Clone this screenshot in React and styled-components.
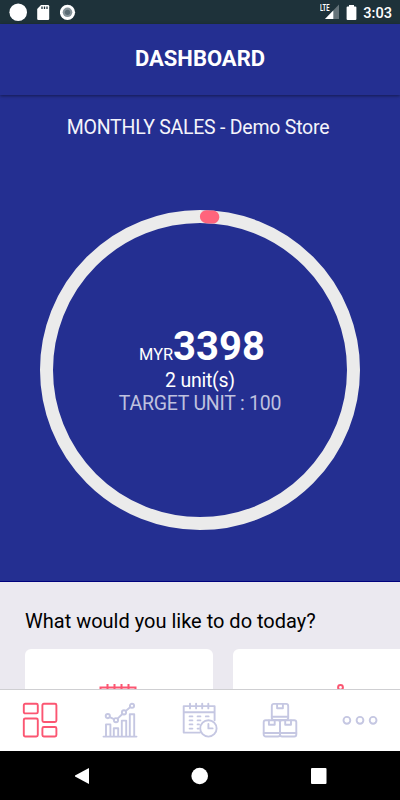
import React from 'react';
import styled, { createGlobalStyle } from 'styled-components';

const Global = createGlobalStyle`
  * { box-sizing: border-box; }
  body { margin: 0; background: #000; font-family: Roboto, "Liberation Sans", sans-serif; }
  svg { display: block; flex: none; }
`;

const Screen = styled.div`
  display: flex;
  flex-direction: column;
  width: 400px;
  height: 800px;
  overflow: hidden;
  background: #242f91;
`;

const StatusBar = styled.div`
  display: flex;
  flex: none;
  align-items: center;
  justify-content: space-between;
  height: 24px;
  padding: 0 8px 0 9px;
  background: #1e323a;
`;

const StatusGroup = styled.div`
  display: flex;
  align-items: center;
  gap: ${(p) => p.$gap}px;
`;

const Clock = styled.span`
  color: #fff;
  font-size: 14.6px;
  line-height: 24px;
  font-weight: 500;
  padding-top: 2px;
`;

const Header = styled.header`
  display: flex;
  flex: none;
  align-items: center;
  justify-content: center;
  height: 71px;
  color: #fff;
  font-size: 22px;
  font-weight: 700;
  padding-bottom: 3px;
  box-shadow: 0 1px 3px rgba(0, 0, 0, 0.45);
`;

const Sales = styled.section`
  display: flex;
  flex: none;
  flex-direction: column;
  align-items: center;
  height: 487px;
  padding-top: 21px;
  border-bottom: 1px solid #00007c;
`;

const StoreTitle = styled.div`
  color: #f4f4fb;
  font-size: 19.5px;
  letter-spacing: -0.24px;
  line-height: 24px;
  margin-left: -4px;
`;

const Gauge = styled.div`
  display: grid;
  place-items: center;
  width: 320px;
  height: 320px;
  margin-top: 70px;
  & > * { grid-area: 1 / 1; }
`;

const Totals = styled.div`
  display: flex;
  flex-direction: column;
  align-items: center;
  padding-top: 7px;
  color: #fff;
`;

const Amount = styled.div`
  display: flex;
  align-items: baseline;
  padding-left: 4px;
  font-size: 40px;
  line-height: 30px;
  font-weight: 700;
`;

const Currency = styled.span`
  font-size: 16.4px;
  font-weight: 400;
`;

const Units = styled.div`
  font-size: 19.5px;
  letter-spacing: -0.24px;
  line-height: 22.5px;
  color: ${(p) => (p.$muted ? '#bfc1df' : '#fff')};
`;

const Actions = styled.section`
  flex: none;
  height: 107px;
  padding: 27px 0 0 25px;
  overflow: hidden;
  background: #ebe9f0;
`;

const Question = styled.h2`
  margin: 0;
  color: #000;
  font-size: 20px;
  line-height: 24px;
  font-weight: 400;
`;

const Cards = styled.div`
  display: flex;
  gap: 20px;
  margin-top: 16px;
`;

const Card = styled.div`
  display: flex;
  flex: none;
  justify-content: center;
  width: 188px;
  height: 150px;
  padding-top: 35px;
  border-radius: 6px;
  background: #fff;
`;

const TabBar = styled.nav`
  display: grid;
  flex: none;
  grid-template-columns: repeat(5, 1fr);
  place-items: center;
  height: 62px;
  padding-bottom: 1px;
  border-top: 1px solid #cfcfd2;
  background: #fff;
`;

const Tab = styled.div`
  color: ${(p) => (p.$active ? '#fb5672' : '#c5c7e2')};
`;

const NavBar = styled.div`
  display: grid;
  flex: none;
  grid-template-columns: 163px 74px 163px;
  place-items: center;
  height: 49px;
  background: #000;
`;

const Icon = ({ children }) => (
  <svg width="36" height="36" viewBox="0 0 36 36" fill="none" stroke="currentColor" strokeWidth="1.9" strokeLinejoin="round" strokeLinecap="round">
    {children}
  </svg>
);

const DashboardIcon = () => (
  <Icon>
    <rect x="1.8" y="1.8" width="14" height="9.6" rx="1.4" />
    <rect x="20.4" y="1.8" width="14" height="18.2" rx="1.4" />
    <rect x="1.8" y="16.5" width="14" height="18" rx="1.4" />
    <rect x="20.4" y="25" width="14" height="9.5" rx="1.4" />
  </Icon>
);

const ChartIcon = () => (
  <Icon>
    <path d="M1.5 34.6h33M4 34.6V22.4h4.4v12.2M11.8 34.6V26.3h4.4v8.3M19.8 34.6V18.6h4.4v16M27.8 34.6V12.3h4.4v22.3M7.7 15.2l4.3 2M15.6 16.6l4.8-4.6M23.9 8.9l4.2-3.7" />
    <circle cx="5.8" cy="14.1" r="2.1" />
    <circle cx="14" cy="18.2" r="2.1" />
    <circle cx="22" cy="10.4" r="2.1" />
    <circle cx="30" cy="3.8" r="2.1" />
  </Icon>
);

const CalendarIcon = () => (
  <Icon>
    <path d="M18 30.6H1.7V4.1h30.9v14.2M1.7 10.3h30.9M8 1.6v4.8M14.1 1.6v4.8M20.2 1.6v4.8M26.3 1.6v4.8" />
    <path d="M7.6 14.4h2.8M15.6 14.4h2.8M23.8 14.4h2.8M7.6 18.4h2.8M15.6 18.4h2.8M7.6 22.4h2.8M15.6 22.4h1.4M7.6 26.6h2.8M15.6 26.6h1" />
    <circle cx="26.4" cy="26.4" r="8.2" />
    <path d="M26.4 22v4.4h4.2" />
  </Icon>
);

const BoxesIcon = () => (
  <Icon>
    <rect x="9.8" y="1.9" width="16.4" height="16" rx="2" />
    <path d="M9.8 14.7h16.4M15.1 2v4.3h5.8V2" />
    <rect x="1.7" y="18.2" width="16.3" height="16.3" rx="2" />
    <rect x="18" y="18.2" width="16.3" height="16.3" rx="2" />
    <path d="M1.7 31h32.6M6.9 18.4v4.3h5.8v-4.3M23.2 18.4v4.3H29v-4.3" />
  </Icon>
);

const MoreIcon = () => (
  <Icon>
    <circle cx="4.9" cy="18.3" r="3.4" />
    <circle cx="18" cy="18.3" r="3.4" />
    <circle cx="31.1" cy="18.3" r="3.4" />
  </Icon>
);

const tabs = [DashboardIcon, ChartIcon, CalendarIcon, BoxesIcon, MoreIcon];

const radius = 153.5;
const pointAt = (deg) => {
  const a = (deg * Math.PI) / 180;
  return `${160 + radius * Math.sin(a)} ${160 - radius * Math.cos(a)}`;
};

export default function App() {
  return (
    <>
      <Global />
      <Screen>
        <StatusBar>
          <StatusGroup $gap={10}>
            <svg width="18" height="24"><circle cx="9.2" cy="12.2" r="8.8" fill="#fff" /></svg>
            <svg width="13" height="24">
              <path d="M4 5h7q1.2 0 1.2 1.2v12.6q0 1.2-1.2 1.2H1.4Q.2 20 .2 18.8V9z" fill="#fff" />
              <path d="M5 6.5v2.5M7.5 6.5v2.5M10 6.5v2.5" stroke="#1e323a" strokeWidth="1.3" />
            </svg>
            <svg width="16" height="24">
              <circle cx="7.5" cy="12.3" r="7.6" fill="#fff" />
              <circle cx="7.5" cy="12.3" r="4.8" fill="#87949a" />
              <circle cx="7.5" cy="12.3" r="2.6" fill="#5b6c74" />
            </svg>
          </StatusGroup>
          <StatusGroup $gap={6}>
            <svg width="20" height="24">
              <path d="M19 4.5V19H5z" fill="#657379" />
              <path d="M13.3 10.5V19H5z" fill="#fff" />
              <text x="0" y="11" fill="#fff" fontSize="8.5" fontWeight="700" textLength="9.5" lengthAdjust="spacingAndGlyphs">LTE</text>
            </svg>
            <svg width="11" height="24">
              <path d="M3 5h5v1.5h1.4q1 0 1 1V19q0 1-1 1H1.6q-1 0-1-1V7.5q0-1 1-1H3z" fill="#fff" />
            </svg>
            <Clock>3:03</Clock>
          </StatusGroup>
        </StatusBar>
        <Header>DASHBOARD</Header>
        <Sales>
          <StoreTitle>MONTHLY SALES - Demo Store</StoreTitle>
          <Gauge>
            <svg width="320" height="320" fill="none" strokeWidth="13">
              <circle cx="160" cy="160" r={radius} stroke="#ebebeb" />
              <path d={`M${pointAt(2.4)} A${radius} ${radius} 0 0 1 ${pointAt(4.8)}`} stroke="#ff647c" strokeLinecap="round" />
            </svg>
            <Totals>
              <Amount><Currency>MYR</Currency>3398</Amount>
              <Units>2 unit(s)</Units>
              <Units $muted>TARGET UNIT : 100</Units>
            </Totals>
          </Gauge>
        </Sales>
        <Actions>
          <Question>What would you like to do today?</Question>
          <Cards>
            <Card>
              <svg width="40" height="40" fill="none" stroke="#fb5672" strokeWidth="2">
                <path d="M1.5 36V3.5h35V36M1 10h35M8.5 0v6M15.5 0v6M22.5 0v6M29.5 0v6" />
              </svg>
            </Card>
            <Card>
              <svg width="40" height="40" fill="none" stroke="#fb5672" strokeWidth="2">
                <circle cx="33.5" cy="3.4" r="2.4" />
                <path d="M29.5 6h3M34.5 6h3" />
              </svg>
            </Card>
          </Cards>
        </Actions>
        <TabBar>
          {tabs.map((Glyph, i) => (
            <Tab key={i} $active={i === 0}><Glyph /></Tab>
          ))}
        </TabBar>
        <NavBar>
          <svg width="16" height="18"><path d="M15 1v16L1 9.4v-.8z" fill="#fff" /></svg>
          <svg width="18" height="18"><circle cx="8.7" cy="9" r="8.3" fill="#fff" /></svg>
          <svg width="16" height="16"><rect width="15.5" height="16" rx="1" fill="#fff" /></svg>
        </NavBar>
      </Screen>
    </>
  );
}
